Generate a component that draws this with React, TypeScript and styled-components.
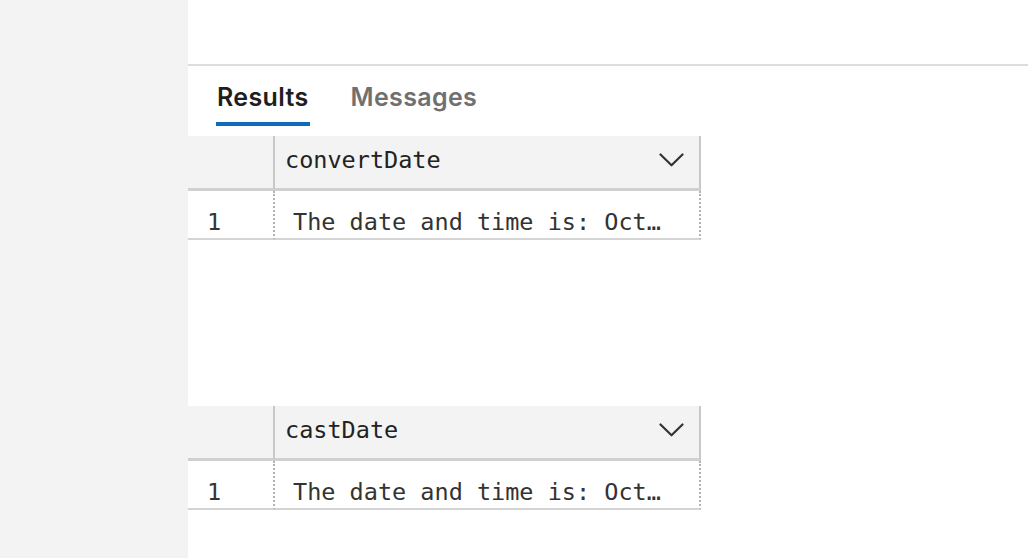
import React from "react";
import styled, { createGlobalStyle } from "styled-components";

const Global = createGlobalStyle`
  html, body { margin: 0; padding: 0; background: #ffffff; }
  body { font-family: Inter, "Noto Sans", sans-serif; }
  *, *::before, *::after { box-sizing: border-box; }
`;

const Page = styled.div`
  display: flex;
  width: 1028px;
  height: 558px;
  overflow: hidden;
`;

const Sidebar = styled.div`
  width: 188px;
  flex-shrink: 0;
  background: #f3f3f3;
`;

const Main = styled.div`
  flex: 1;
  display: flex;
  flex-direction: column;
  background: #ffffff;
`;

const TopSpace = styled.div`
  height: 66px;
  border-bottom: 2px solid #dddddd;
`;

const TabBar = styled.div`
  display: flex;
  gap: 40px;
  padding-left: 28px;
`;

const Tab = styled.div<{ $active?: boolean }>`
  font-family: Inter, "Noto Sans", sans-serif;
  font-size: 25px;
  line-height: 30px;
  font-weight: 600;
  letter-spacing: 0.35px;
  color: ${(p) => (p.$active ? "#1f1f1f" : "#707070")};
  padding: 16px 1px 10px;
  border-bottom: 4px solid ${(p) => (p.$active ? "#0f6cbd" : "transparent")};
`;

const Grid = styled.div<{ $top: number }>`
  display: grid;
  grid-template-columns: 87px 426px;
  margin-top: ${(p) => p.$top}px;
  font-family: "DejaVu Sans Mono", "Liberation Mono", monospace;
  font-size: 23.5px;
  color: #333333;
`;

const HeadCorner = styled.div`
  height: 55px;
  background: #f3f3f3;
  border-right: 2px solid #c8c8c8;
  border-bottom: 3px solid #d0d0d0;
`;

const HeadCell = styled.div`
  height: 55px;
  background: #f3f3f3;
  border-right: 2px solid #c8c8c8;
  border-bottom: 3px solid #d0d0d0;
  display: flex;
  align-items: center;
  justify-content: space-between;
  padding: 0 15px 4px 10px;
  color: #222222;
`;

const Cell = styled.div<{ $num?: boolean }>`
  height: 49px;
  display: flex;
  align-items: center;
  border-right: 2px dotted #b4b4b4;
  border-bottom: 2px solid #d4d4d4;
  padding-top: 15px;
  padding-left: ${(p) => (p.$num ? "19px" : "18px")};
  white-space: nowrap;
  min-width: 0;
`;

const Chevron = () => (
  <svg width="25" height="14" viewBox="0 0 25 14" fill="none">
    <path d="M1.5 1.5 L12.5 12.3 L23.5 1.5" stroke="#333" strokeWidth="2.2" strokeLinecap="round" strokeLinejoin="round" />
  </svg>
);

const ResultGrid = ({ column, top }: { column: string; top: number }) => (
  <Grid $top={top}>
    <HeadCorner />
    <HeadCell>
      <span>{column}</span>
      <Chevron />
    </HeadCell>
    <Cell $num>1</Cell>
    <Cell>The date and time is: Oct…</Cell>
  </Grid>
);

export default function App() {
  return (
    <>
      <Global />
      <Page>
        <Sidebar />
        <Main>
          <TopSpace />
          <TabBar>
            <Tab $active>Results</Tab>
            <Tab>Messages</Tab>
          </TabBar>
          <ResultGrid column="convertDate" top={10} />
          <ResultGrid column="castDate" top={166} />
        </Main>
      </Page>
    </>
  );
}
